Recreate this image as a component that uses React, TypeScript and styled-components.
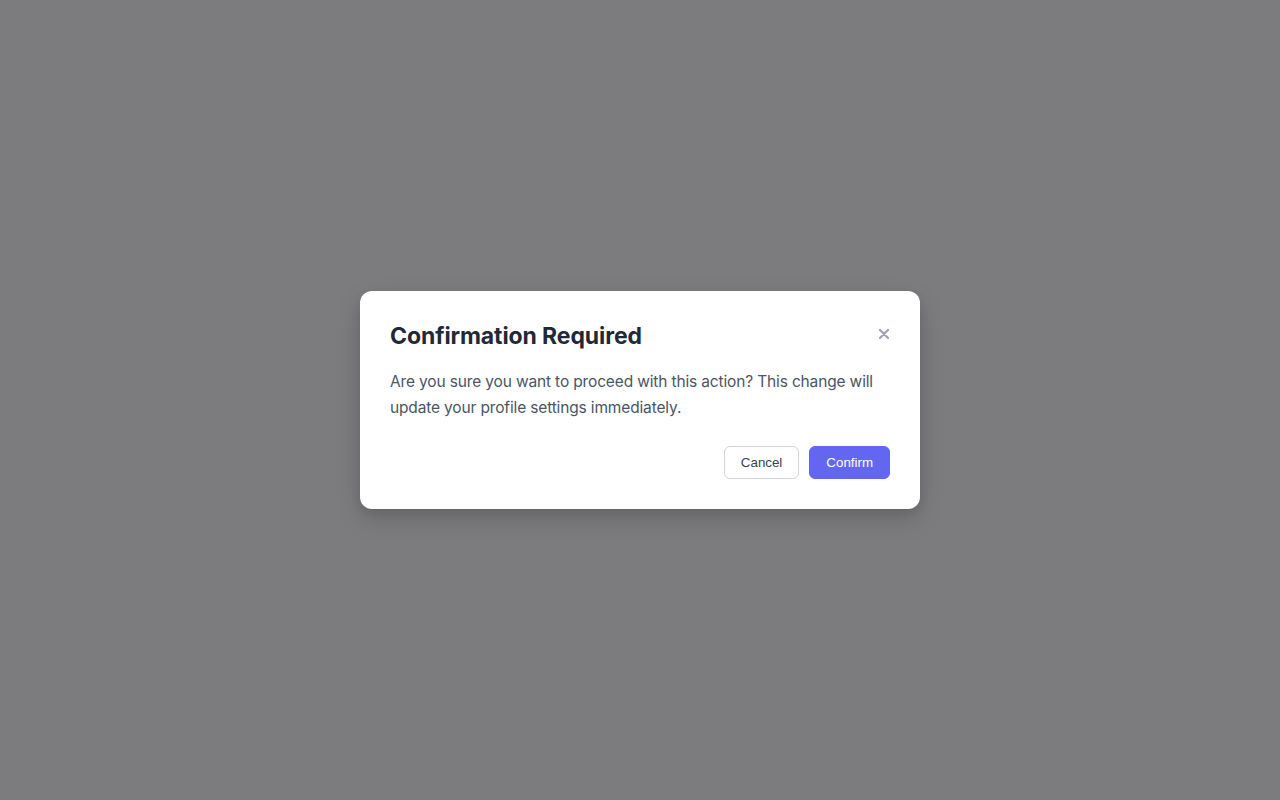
import styled, { createGlobalStyle } from "styled-components";

const GlobalStyle = createGlobalStyle`
  html, body {
    margin: 0;
    padding: 0;
    height: 100%;
  }
  body {
    font-family: Inter, "Liberation Sans", sans-serif;
    background: #ffffff;
  }
  #root {
    height: 100%;
  }
`;

const Overlay = styled.div`
  height: 100vh;
  background: rgba(4, 4, 8, 0.52);
  display: flex;
  align-items: center;
  justify-content: center;
`;

const Dialog = styled.div`
  width: 560px;
  box-sizing: border-box;
  padding: 30px;
  background: #ffffff;
  border-radius: 12px;
  box-shadow: 0 10px 25px rgba(0, 0, 0, 0.15), 0 4px 10px rgba(0, 0, 0, 0.08);
`;

const Header = styled.div`
  display: flex;
  align-items: flex-start;
  justify-content: space-between;
  margin-bottom: 18px;
`;

const Title = styled.h2`
  margin: 0;
  font-size: 23px;
  line-height: 30px;
  font-weight: 700;
  letter-spacing: -0.1px;
  color: #1f2937;
`;

const CloseButton = styled.button`
  border: none;
  background: none;
  padding: 0;
  width: 14px;
  height: 14px;
  margin: 6px -1px 0 0;
  display: flex;
  align-items: center;
  justify-content: center;
  color: #9ca3af;
  cursor: pointer;
`;

const Message = styled.p`
  margin: 0 0 25px;
  font-size: 15.5px;
  line-height: 26px;
  letter-spacing: -0.15px;
  color: #4b5563;
`;

const Actions = styled.div`
  display: flex;
  justify-content: flex-end;
  gap: 10px;
`;

const Button = styled.button<{ $primary?: boolean }>`
  font-family: "Liberation Sans", Arial, sans-serif;
  font-size: 13.33px;
  height: 33px;
  padding: 0 16px;
  border-radius: 6px;
  cursor: pointer;
  border: 1px solid ${(p) => (p.$primary ? "#6366f1" : "#d1d5db")};
  background: ${(p) => (p.$primary ? "#6366f1" : "#ffffff")};
  color: ${(p) => (p.$primary ? "#ffffff" : "#374151")};
`;

export default function App() {
  return (
    <>
      <GlobalStyle />
      <Overlay>
        <Dialog>
          <Header>
            <Title>Confirmation Required</Title>
            <CloseButton aria-label="Close">
              <svg width="10" height="10" viewBox="0 0 10 10">
                <path d="M1 1 L9 9 M9 1 L1 9" stroke="currentColor" strokeWidth="2.2" strokeLinecap="round" />
              </svg>
            </CloseButton>
          </Header>
          <Message>
            Are you sure you want to proceed with this action? This change will update your profile settings
            immediately.
          </Message>
          <Actions>
            <Button>Cancel</Button>
            <Button $primary>Confirm</Button>
          </Actions>
        </Dialog>
      </Overlay>
    </>
  );
}
